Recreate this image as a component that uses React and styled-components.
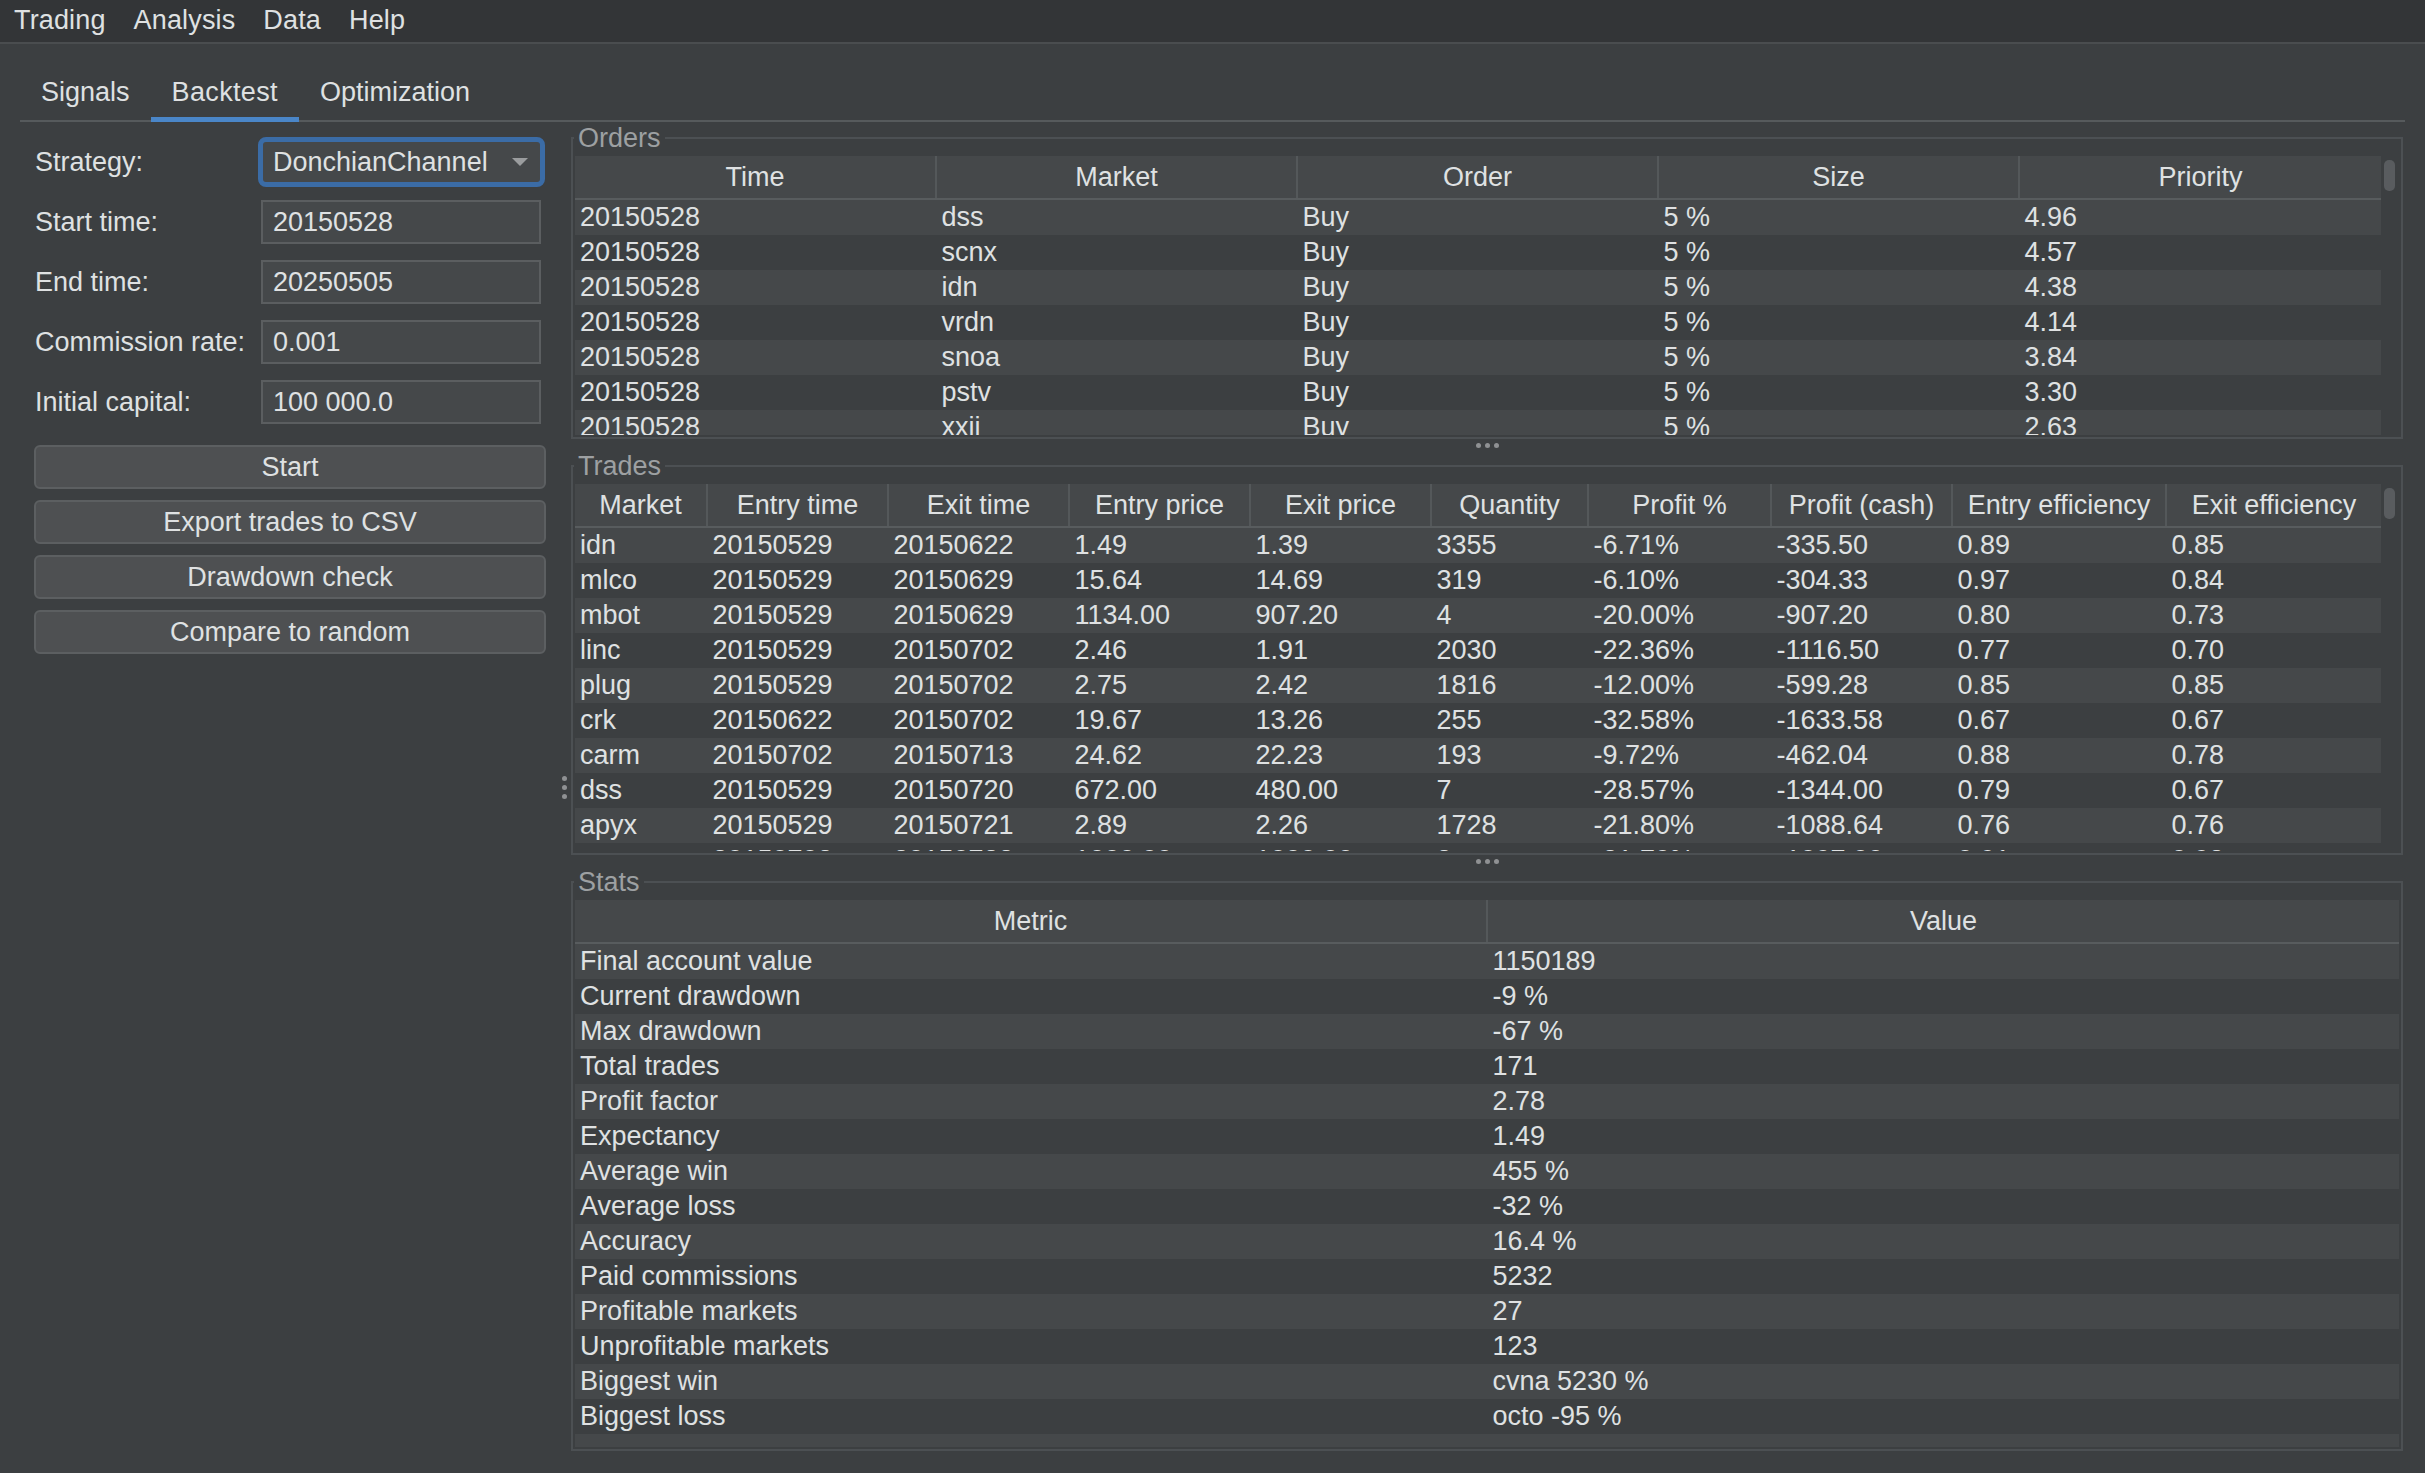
import React from "react";
import styled, { createGlobalStyle } from "styled-components";

const GlobalStyle = createGlobalStyle`
  html, body {
    margin: 0;
    padding: 0;
    background: #3c3f41;
  }
  body {
    font-family: "Liberation Sans", Arial, sans-serif;
    font-size: 27px;
    color: #dfe1e2;
  }
`;

const Page = styled.div`
  width: 2425px;
  height: 1473px;
  overflow: hidden;
  background: #3c3f41;
`;

const MenuBar = styled.div`
  display: flex;
  height: 42px;
  box-sizing: content-box;
  background: #333537;
  border-bottom: 2px solid #4a4d4f;
`;

const MenuItem = styled.div`
  padding: 0 14px;
  line-height: 41px;
  letter-spacing: 0.15px;
`;

const TabBar = styled.div`
  display: flex;
  box-sizing: border-box;
  height: 54px;
  margin: 24px 20px 0;
  border-bottom: 2px solid #565a5c;
`;

const Tab = styled.div`
  display: flex;
  align-items: center;
  box-sizing: border-box;
  height: 54px;
  padding: 0 21px;
  letter-spacing: ${(p) => (p.$active ? "0.35px" : "0")};
  border-bottom: 5px solid ${(p) => (p.$active ? "#4a86c8" : "transparent")};
`;

const Content = styled.div`
  display: flex;
  height: 1331px;
`;

const LeftPanel = styled.div`
  width: 512px;
  margin-left: 34px;
  padding-top: 10px;
`;

const FormRow = styled.div`
  display: flex;
  align-items: center;
  height: 60px;
  padding-left: 1px;
`;

const Label = styled.div`
  width: 226px;
  flex: none;
`;

const Field = styled.div`
  box-sizing: border-box;
  width: 280px;
  height: 44px;
  padding-left: 10px;
  line-height: 40px;
  background: #45484a;
  border: 2px solid #5b5e60;
`;

const Combo = styled.div`
  display: flex;
  align-items: center;
  justify-content: space-between;
  box-sizing: border-box;
  width: 287px;
  height: 50px;
  margin-left: -3px;
  padding: 0 12px 0 10px;
  background: #45484a;
  border: 5px solid #3b6ca6;
  border-radius: 8px;
`;

const ComboArrow = styled.svg`
  width: 16px;
  height: 8px;
  flex: none;
`;

const ButtonStack = styled.div`
  display: flex;
  flex-direction: column;
  gap: 11px;
  margin-top: 13px;
`;

const ActionButton = styled.button`
  box-sizing: border-box;
  height: 44px;
  padding: 0;
  font: inherit;
  color: inherit;
  background: #4e5052;
  border: 2px solid #5c5f61;
  border-radius: 6px;
`;

const VerticalHandle = styled.div`
  display: flex;
  flex-direction: column;
  align-items: flex-end;
  justify-content: center;
  gap: 4px;
  box-sizing: border-box;
  width: 25px;
  padding-right: 4px;
`;

const HorizontalHandle = styled.div`
  display: flex;
  align-items: center;
  justify-content: center;
  gap: 4px;
  height: 12px;
  margin-bottom: 14px;
`;

const Dot = styled.span`
  display: block;
  width: 5px;
  height: 5px;
  border-radius: 50%;
  background: #8f9193;
`;

const RightPanel = styled.div`
  display: flex;
  flex-direction: column;
  width: 1832px;
  margin-top: 15px;
`;

const Group = styled.div`
  position: relative;
  display: flex;
  box-sizing: border-box;
  height: ${(p) => p.$height}px;
  padding: 17px 2px 2px;
  border: 2px solid #4c5053;
`;

const Legend = styled.div`
  position: absolute;
  top: -16px;
  left: 1px;
  padding: 0 4px;
  line-height: 30px;
  color: #9da0a2;
  background: #3c3f41;
`;

const TableView = styled.div`
  flex: 1;
  min-width: 0;
  overflow: hidden;
`;

const HeaderRow = styled.div`
  display: grid;
  grid-template-columns: ${(p) => p.$columns};
  box-sizing: border-box;
  height: 44px;
  background: #45484a;
  border-bottom: 2px solid #585c5e;
`;

const HeaderCell = styled.div`
  overflow: hidden;
  line-height: 42px;
  text-align: center;
  white-space: nowrap;
  border-left: 2px solid #54585a;

  &:first-child {
    border-left: none;
  }
`;

const TableRow = styled.div`
  display: grid;
  grid-template-columns: ${(p) => p.$columns};
  height: 35px;
  background: #3c3f41;

  &:nth-child(odd) {
    background: #45484a;
  }
`;

const TableCell = styled.div`
  overflow: hidden;
  padding-left: 6.5px;
  line-height: 35px;
  white-space: nowrap;

  &:first-child {
    padding-left: 5px;
  }
`;

const ScrollTrack = styled.div`
  flex: none;
  width: 18px;
  padding: 4px 4px 0 3px;
  box-sizing: border-box;
`;

const ScrollThumb = styled.div`
  width: 11px;
  height: 31px;
  border-radius: 5px;
  background: #595c5f;
`;

const menus = ["Trading", "Analysis", "Data", "Help"];
const tabs = ["Signals", "Backtest", "Optimization"];

const fields = [
  ["Start time:", "20150528"],
  ["End time:", "20250505"],
  ["Commission rate:", "0.001"],
  ["Initial capital:", "100 000.0"],
];

const actions = ["Start", "Export trades to CSV", "Drawdown check", "Compare to random"];

const orderColumns = "360px 361px 361px 361px 363px";
const orderHeaders = ["Time", "Market", "Order", "Size", "Priority"];
const orders = [
  ["20150528", "dss", "Buy", "5 %", "4.96"],
  ["20150528", "scnx", "Buy", "5 %", "4.57"],
  ["20150528", "idn", "Buy", "5 %", "4.38"],
  ["20150528", "vrdn", "Buy", "5 %", "4.14"],
  ["20150528", "snoa", "Buy", "5 %", "3.84"],
  ["20150528", "pstv", "Buy", "5 %", "3.30"],
  ["20150528", "xxii", "Buy", "5 %", "2.63"],
];

const tradeColumns = "131px 181px 181px 181px 181px 157px 183px 181px 214px 216px";
const tradeHeaders = [
  "Market",
  "Entry time",
  "Exit time",
  "Entry price",
  "Exit price",
  "Quantity",
  "Profit %",
  "Profit (cash)",
  "Entry efficiency",
  "Exit efficiency",
];
const trades = [
  ["idn", "20150529", "20150622", "1.49", "1.39", "3355", "-6.71%", "-335.50", "0.89", "0.85"],
  ["mlco", "20150529", "20150629", "15.64", "14.69", "319", "-6.10%", "-304.33", "0.97", "0.84"],
  ["mbot", "20150529", "20150629", "1134.00", "907.20", "4", "-20.00%", "-907.20", "0.80", "0.73"],
  ["linc", "20150529", "20150702", "2.46", "1.91", "2030", "-22.36%", "-1116.50", "0.77", "0.70"],
  ["plug", "20150529", "20150702", "2.75", "2.42", "1816", "-12.00%", "-599.28", "0.85", "0.85"],
  ["crk", "20150622", "20150702", "19.67", "13.26", "255", "-32.58%", "-1633.58", "0.67", "0.67"],
  ["carm", "20150702", "20150713", "24.62", "22.23", "193", "-9.72%", "-462.04", "0.88", "0.78"],
  ["dss", "20150529", "20150720", "672.00", "480.00", "7", "-28.57%", "-1344.00", "0.79", "0.67"],
  ["apyx", "20150529", "20150721", "2.89", "2.26", "1728", "-21.80%", "-1088.64", "0.76", "0.76"],
  ["sava", "20150702", "20150722", "1000.00", "1000.00", "2", "-21.70%", "-1097.00", "0.91", "0.93"],
];

const statColumns = "911px 913px";
const statHeaders = ["Metric", "Value"];
const stats = [
  ["Final account value", "1150189"],
  ["Current drawdown", "-9 %"],
  ["Max drawdown", "-67 %"],
  ["Total trades", "171"],
  ["Profit factor", "2.78"],
  ["Expectancy", "1.49"],
  ["Average win", "455 %"],
  ["Average loss", "-32 %"],
  ["Accuracy", "16.4 %"],
  ["Paid commissions", "5232"],
  ["Profitable markets", "27"],
  ["Unprofitable markets", "123"],
  ["Biggest win", "cvna 5230 %"],
  ["Biggest loss", "octo -95 %"],
  ["", ""],
];

const Dots = () => (
  <>
    <Dot />
    <Dot />
    <Dot />
  </>
);

const DataTable = ({ columns, headers, rows }) => (
  <TableView>
    <HeaderRow $columns={columns}>
      {headers.map((h) => (
        <HeaderCell key={h}>{h}</HeaderCell>
      ))}
    </HeaderRow>
    <div>
      {rows.map((row, i) => (
        <TableRow key={i} $columns={columns}>
          {row.map((cell, j) => (
            <TableCell key={j}>{cell}</TableCell>
          ))}
        </TableRow>
      ))}
    </div>
  </TableView>
);

const App = () => (
  <Page>
    <GlobalStyle />
    <MenuBar>
      {menus.map((m) => (
        <MenuItem key={m}>{m}</MenuItem>
      ))}
    </MenuBar>
    <TabBar>
      {tabs.map((t) => (
        <Tab key={t} $active={t === "Backtest"}>
          {t}
        </Tab>
      ))}
    </TabBar>
    <Content>
      <LeftPanel>
        <FormRow>
          <Label>Strategy:</Label>
          <Combo>
            DonchianChannel
            <ComboArrow viewBox="0 0 16 8">
              <path d="M0 0H16L8 8Z" fill="#9a9c9e" />
            </ComboArrow>
          </Combo>
        </FormRow>
        {fields.map(([label, value]) => (
          <FormRow key={label}>
            <Label>{label}</Label>
            <Field>{value}</Field>
          </FormRow>
        ))}
        <ButtonStack>
          {actions.map((a) => (
            <ActionButton key={a}>{a}</ActionButton>
          ))}
        </ButtonStack>
      </LeftPanel>
      <VerticalHandle>
        <Dots />
      </VerticalHandle>
      <RightPanel>
        <Group $height={302}>
          <Legend>Orders</Legend>
          <DataTable columns={orderColumns} headers={orderHeaders} rows={orders} />
          <ScrollTrack>
            <ScrollThumb />
          </ScrollTrack>
        </Group>
        <HorizontalHandle>
          <Dots />
        </HorizontalHandle>
        <Group $height={390}>
          <Legend>Trades</Legend>
          <DataTable columns={tradeColumns} headers={tradeHeaders} rows={trades} />
          <ScrollTrack>
            <ScrollThumb />
          </ScrollTrack>
        </Group>
        <HorizontalHandle>
          <Dots />
        </HorizontalHandle>
        <Group $height={570}>
          <Legend>Stats</Legend>
          <DataTable columns={statColumns} headers={statHeaders} rows={stats} />
        </Group>
      </RightPanel>
    </Content>
  </Page>
);

export default App;
